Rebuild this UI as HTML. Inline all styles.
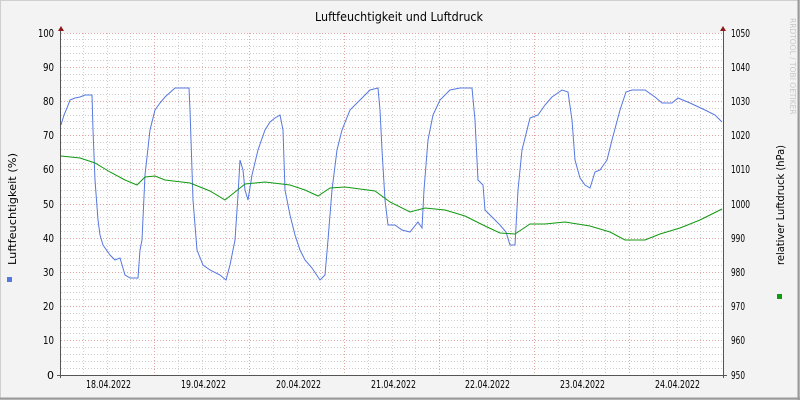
<!DOCTYPE html>
<html><head><meta charset="utf-8"><style>
html,body{margin:0;padding:0;background:#f3f3f3;}
svg{display:block;font-family:"DejaVu Sans","Liberation Sans",sans-serif;}
</style></head><body>
<svg width="800" height="400" viewBox="0 0 800 400" xmlns="http://www.w3.org/2000/svg">
<rect x="0" y="0" width="800" height="400" fill="#f3f3f3"/>
<rect x="0.5" y="0.5" width="799" height="399" fill="none" stroke="#cfcfcf"/>
<line x1="0" y1="398.5" x2="800" y2="398.5" stroke="#9a9a9a" stroke-width="2"/>
<line x1="798.5" y1="0" x2="798.5" y2="400" stroke="#9a9a9a" stroke-width="2"/>
<rect x="61" y="33" width="662" height="342" fill="#ffffff"/>
<g stroke="#cfcfcf" stroke-dasharray="1,2" stroke-width="1" shape-rendering="crispEdges">
<path d="M61 368.5H723M61 361.5H723M61 354.5H723M61 347.5H723M61 333.5H723M61 327.5H723M61 320.5H723M61 313.5H723M61 299.5H723M61 292.5H723M61 286.5H723M61 279.5H723M61 265.5H723M61 258.5H723M61 251.5H723M61 245.5H723M61 231.5H723M61 224.5H723M61 217.5H723M61 210.5H723M61 197.5H723M61 190.5H723M61 183.5H723M61 176.5H723M61 163.5H723M61 156.5H723M61 149.5H723M61 142.5H723M61 128.5H723M61 121.5H723M61 115.5H723M61 108.5H723M61 94.5H723M61 87.5H723M61 80.5H723M61 74.5H723M61 60.5H723M61 53.5H723M61 46.5H723M61 39.5H723"/>
<path d="M83.5 33V375M107.5 33V375M130.5 33V375M178.5 33V375M202.5 33V375M225.5 33V375M273.5 33V375M297.5 33V375M320.5 33V375M368.5 33V375M392.5 33V375M415.5 33V375M463.5 33V375M487.5 33V375M510.5 33V375M558.5 33V375M582.5 33V375M605.5 33V375M653.5 33V375M677.5 33V375M700.5 33V375"/>
</g>
<g stroke="#e3a3a3" stroke-dasharray="1,2" stroke-width="1" shape-rendering="crispEdges">
<path d="M61 340.5H723M61 306.5H723M61 272.5H723M61 238.5H723M61 204.5H723M61 169.5H723M61 135.5H723M61 101.5H723M61 67.5H723M61 33.5H723"/>
<path d="M154.5 33V375M249.5 33V375M344.5 33V375M439.5 33V375M534.5 33V375M629.5 33V375"/>
</g>
<polyline fill="none" stroke="#5577e0" stroke-width="1" points="61,125 64,115 67,108 70,100 75,98 80,97 85,95 92,95 93,130 95,180 98,220 100,235 103,245 110,255 115,260 120,258 125,275 130,278 138,278 140,250 142,240 145,175 150,130 155,110 160,103 165,97 175,88 189,88 190,110 193,200 197,250 203,265 210,270 220,275 226,280 230,265 235,240 238,195 240,160 243,170 245,190 248,200 252,175 258,150 265,130 270,122 275,118 280,115 283,130 285,190 290,215 295,235 300,250 305,260 312,268 320,280 325,275 328,240 332,190 337,150 342,130 350,110 360,100 370,90 378,88 380,110 382,150 385,200 388,225 395,225 402,230 410,232 418,222 422,228 424,190 428,140 433,115 440,100 450,90 460,88 472,88 475,120 478,180 483,185 485,210 490,215 495,220 500,225 506,232 510,245 515,245 518,190 522,150 530,118 538,115 545,105 552,97 562,90 568,92 572,120 575,160 580,178 585,185 590,188 595,172 600,170 607,160 612,140 620,110 626,92 632,90 645,90 655,97 662,103 672,103 678,98 690,103 705,110 715,115 722,122"/>
<polyline fill="none" stroke="#119911" stroke-width="1" points="61,156 80,158 95,163 110,172 125,180 137,185 145,177 155,176 165,180 190,183 210,191 225,200 235,192 245,184 265,182 290,185 305,190 318,196 330,188 345,187 375,191 390,202 410,212 425,208 445,210 465,216 485,226 500,233 515,234 530,224 545,224 565,222 590,226 610,232 625,240 645,240 660,234 680,228 700,220 722,209"/>
<g stroke="#555" stroke-width="1" shape-rendering="crispEdges">
<line x1="60.5" y1="30" x2="60.5" y2="378"/>
<line x1="723.5" y1="30" x2="723.5" y2="378"/>
<line x1="57" y1="375.5" x2="727" y2="375.5"/>
</g>
<polygon points="58,31 64,31 61,26" fill="#8b1a1a"/>
<polygon points="720,31 726,31 723,26" fill="#8b1a1a"/>
<text x="315" y="21" font-size="12.5" textLength="168" lengthAdjust="spacingAndGlyphs" fill="#000">Luftfeuchtigkeit und Luftdruck</text>
<g font-size="11" fill="#000" text-anchor="end">
<text x="54" y="37" textLength="16" lengthAdjust="spacingAndGlyphs">100</text><text x="54" y="71" textLength="11" lengthAdjust="spacingAndGlyphs">90</text><text x="54" y="105" textLength="11" lengthAdjust="spacingAndGlyphs">80</text><text x="54" y="139" textLength="11" lengthAdjust="spacingAndGlyphs">70</text><text x="54" y="173" textLength="11" lengthAdjust="spacingAndGlyphs">60</text><text x="54" y="208" textLength="11" lengthAdjust="spacingAndGlyphs">50</text><text x="54" y="242" textLength="11" lengthAdjust="spacingAndGlyphs">40</text><text x="54" y="276" textLength="11" lengthAdjust="spacingAndGlyphs">30</text><text x="54" y="310" textLength="11" lengthAdjust="spacingAndGlyphs">20</text><text x="54" y="344" textLength="11" lengthAdjust="spacingAndGlyphs">10</text><text x="54" y="379">0</text>
</g>
<g font-size="11" fill="#000">
<text x="731" y="37" textLength="19" lengthAdjust="spacingAndGlyphs">1050</text><text x="731" y="71" textLength="19" lengthAdjust="spacingAndGlyphs">1040</text><text x="731" y="105" textLength="19" lengthAdjust="spacingAndGlyphs">1030</text><text x="731" y="139" textLength="19" lengthAdjust="spacingAndGlyphs">1020</text><text x="731" y="173" textLength="19" lengthAdjust="spacingAndGlyphs">1010</text><text x="731" y="208" textLength="19" lengthAdjust="spacingAndGlyphs">1000</text><text x="731" y="242" textLength="14" lengthAdjust="spacingAndGlyphs">990</text><text x="731" y="276" textLength="14" lengthAdjust="spacingAndGlyphs">980</text><text x="731" y="310" textLength="14" lengthAdjust="spacingAndGlyphs">970</text><text x="731" y="344" textLength="14" lengthAdjust="spacingAndGlyphs">960</text><text x="731" y="379" textLength="14" lengthAdjust="spacingAndGlyphs">950</text>
</g>
<g font-size="11" fill="#000">
<text x="86" y="388" textLength="45" lengthAdjust="spacingAndGlyphs">18.04.2022</text><text x="181" y="388" textLength="45" lengthAdjust="spacingAndGlyphs">19.04.2022</text><text x="276" y="388" textLength="45" lengthAdjust="spacingAndGlyphs">20.04.2022</text><text x="371" y="388" textLength="45" lengthAdjust="spacingAndGlyphs">21.04.2022</text><text x="465" y="388" textLength="45" lengthAdjust="spacingAndGlyphs">22.04.2022</text><text x="560" y="388" textLength="45" lengthAdjust="spacingAndGlyphs">23.04.2022</text><text x="655" y="388" textLength="45" lengthAdjust="spacingAndGlyphs">24.04.2022</text>
</g>
<text transform="translate(16,209) rotate(-90)" font-size="11" text-anchor="middle" textLength="112" lengthAdjust="spacingAndGlyphs" fill="#000">Luftfeuchtigkeit (%)</text>
<text transform="translate(784,205) rotate(-90)" font-size="11" text-anchor="middle" textLength="120" lengthAdjust="spacingAndGlyphs" fill="#000">relativer Luftdruck (hPa)</text>
<text transform="translate(790,18) rotate(90)" font-size="7.5" fill="#c8c8c8">RRDTOOL / TOBI OETIKER</text>
<rect x="7" y="277" width="5" height="5" fill="#5577e0"/>
<rect x="777" y="294" width="5" height="5" fill="#119911"/>
</svg>
</body></html>
